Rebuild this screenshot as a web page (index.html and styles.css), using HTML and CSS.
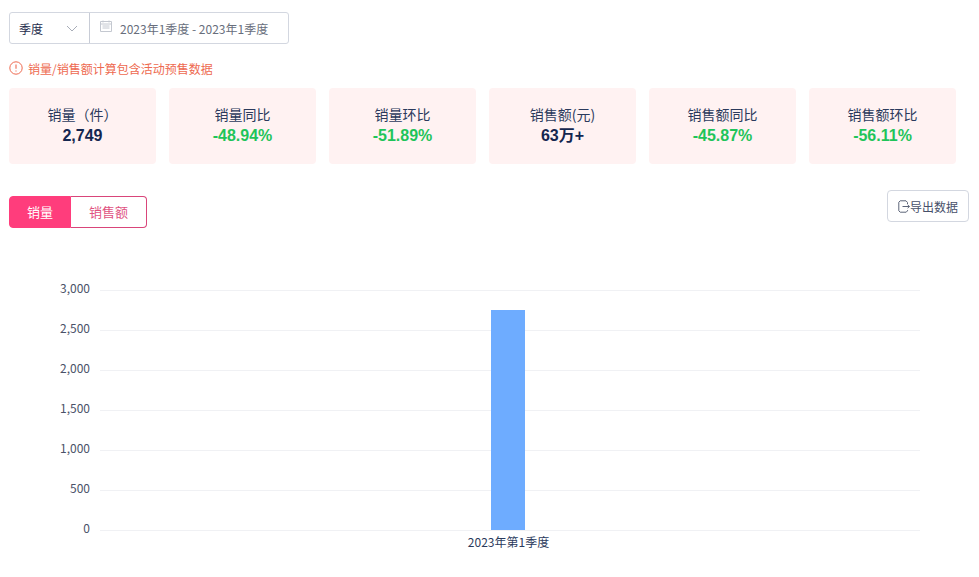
FILE: index.html
```html
<!DOCTYPE html>
<html lang="zh-CN">
<head>
    <meta charset="UTF-8">
    <title>销量</title>
    <link rel="stylesheet" href="styles.css">
</head>
<body>
    <div class="filter">
        <div class="period">
            <span>季度</span>
            <svg class="arrow" width="12" height="7" viewBox="0 0 12 7"><path d="M1 1l5 5 5-5" fill="none" stroke="#a8adb8" stroke-width="1"/></svg>
        </div>
        <div class="range">
            <svg class="cal" width="12" height="12" viewBox="0 0 12 12"><path d="M.5 1.5h11v10H.5zM.5 4h11M3 .5v2M9 .5v2M2.5 6h7M2.5 8h7" fill="none" stroke="#c4c8d0" stroke-width="1"/></svg>
            <span>2023年1季度 - 2023年1季度</span>
        </div>
    </div>

    <div class="notice">
        <svg width="14" height="14" viewBox="0 0 14 14"><circle cx="7" cy="7" r="6.2" fill="none" stroke="#ee6a50" stroke-width="1"/><path d="M7 3.5v4.2M7 9.4v1.2" stroke="#ee6a50" stroke-width="1.1"/></svg>
        <span>销量/销售额计算包含活动预售数据</span>
    </div>

    <ul class="cards">
        <li><p>销量（件）</p><b>2,749</b></li>
        <li><p>销量同比</p><b class="down">-48.94%</b></li>
        <li><p>销量环比</p><b class="down">-51.89%</b></li>
        <li><p>销售额(元)</p><b>63万+</b></li>
        <li><p>销售额同比</p><b class="down">-45.87%</b></li>
        <li><p>销售额环比</p><b class="down">-56.11%</b></li>
    </ul>

    <div class="bar">
        <div class="tabs">
            <div class="tab on">销量</div>
            <div class="tab">销售额</div>
        </div>
        <div class="export">
            <svg width="12" height="13" viewBox="0 0 12 13"><path d="M9.5 4V2.5L8 .8H2.2L.8 2.2v8.6l1.4 1.4h6l1.3-1.4V10M4.5 6.5h7M9.6 4.8l1.8 1.7-1.8 1.7" fill="none" stroke="#5c6478" stroke-width="1"/></svg>
            <span>导出数据</span>
        </div>
    </div>

    <svg class="chart" width="979" height="337" viewBox="0 240 979 337">
        <g class="grid">
            <path d="M100 288.5h820M100 328.5h820M100 368.5h820M100 408.5h820M100 448.5h820M100 488.5h820M100 528.5h820"/>
        </g>
        <g class="yaxis">
            <text x="90" y="291">3,000</text>
            <text x="90" y="331">2,500</text>
            <text x="90" y="371">2,000</text>
            <text x="90" y="411">1,500</text>
            <text x="90" y="451">1,000</text>
            <text x="90" y="491">500</text>
            <text x="90" y="531">0</text>
        </g>
        <rect x="491" y="308" width="34" height="220" fill="#6eacff"/>
        <text class="xaxis" x="508.500" y="545">2023年第1季度</text>
    </svg>
</body>
</html>
```

FILE: styles.css
```css
*{
    box-sizing: border-box;
}
body{
    margin: 0;
    padding: 12px 10px 0 9px;
    height: 577px;
    overflow: hidden;
    background: #fff;
    font-family: "Noto Sans CJK SC", "Liberation Sans", sans-serif;
    font-size: 12px;
    color: #1f2d4d;
}
p,ul{
    margin: 0;
    padding: 0;
    list-style: none;
}
.filter{
    display: flex;
    width: 280px;
    height: 32px;
    border: 1px solid #d3d7e0;
    border-radius: 3px;
}
.period{
    width: 80px;
    padding: 0 11px 0 9px;
    display: flex;
    align-items: center;
    justify-content: space-between;
    border-right: 1px solid #c8ccd6;
}
.range{
    flex: 1;
    padding-left: 10px;
    display: flex;
    align-items: center;
    gap: 8px;
    color: #686e7c;
}
.cal{
    margin-top: -4px;
}
.notice{
    margin-top: 16px;
    height: 16px;
    display: flex;
    align-items: center;
    gap: 5px;
    color: #ee6a50;
}
.cards{
    margin-top: 12px;
    width: 947px;
    display: flex;
    justify-content: space-between;
}
.cards li{
    width: 147px;
    height: 76px;
    padding-top: 16px;
    background: #fff2f2;
    border-radius: 4px;
    text-align: center;
}
.cards p{
    font-size: 14px;
    line-height: 20px;
    color: #2b3a5c;
}
.cards b{
    display: block;
    font-family: "Liberation Sans", "Noto Sans CJK SC", sans-serif;
    font-size: 16px;
    line-height: 24px;
    color: #14264f;
}
.cards .down{
    color: #1fc45a;
}
.bar{
    margin-top: 26px;
    height: 50px;
    display: flex;
    justify-content: space-between;
}
.tabs{
    margin-top: 6px;
    height: 32px;
    display: flex;
}
.tab{
    width: 76px;
    line-height: 30px;
    border: 1px solid #d9457a;
    border-left: 0;
    border-radius: 0 4px 4px 0;
    text-align: center;
    font-size: 13px;
    color: #e0527f;
}
.tab.on{
    width: 62px;
    border: 1px solid #ff3d7c;
    border-radius: 4px 0 0 4px;
    background: #ff3d7c;
    color: #fff;
}
.export{
    width: 82px;
    height: 32px;
    display: flex;
    align-items: center;
    justify-content: center;
    border: 1px solid #d3d7e0;
    border-radius: 4px;
    color: #47506a;
}
.chart{
    display: block;
    margin: 2px 0 0 -9px;
}
.grid path{
    fill: none;
    stroke: #f0f1f4;
    stroke-width: 1;
}
.yaxis text{
    text-anchor: end;
    font-size: 12px;
    fill: #4a5268;
}
.xaxis{
    text-anchor: middle;
    font-size: 12px;
    fill: #2b3a5c;
}
```
